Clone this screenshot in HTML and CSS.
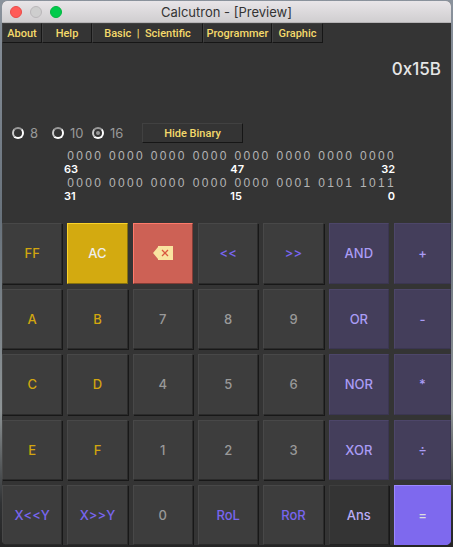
FILE: index.html
```html
<!DOCTYPE html>
<html lang="en">
<head>
<meta charset="utf-8">
<title>Calcutron</title>
<link rel="stylesheet" href="styles.css">
</head>
<body>
<main class="window">
  <header class="titlebar">
    <div class="lights">
      <span class="light close"></span>
      <span class="light minimize"></span>
      <span class="light zoom"></span>
    </div>
    <h1>Calcutron - [Preview]</h1>
  </header>
  <div class="panel">
    <nav class="menu">
      <button class="about">About</button>
      <button class="help">Help</button>
      <button class="modes">Basic &nbsp;|&nbsp; Scientific</button>
      <button class="programmer">Programmer</button>
      <button class="graphic">Graphic</button>
    </nav>
    <output class="display">0x15B</output>
    <div class="options">
      <label><input type="radio" name="base">8</label>
      <label><input type="radio" name="base">10</label>
      <label><input type="radio" name="base" checked>16</label>
      <button class="toggle">Hide Binary</button>
    </div>
    <section class="binary">
      <div class="bits">
        <div class="nibble"><i>0</i><i>0</i><i>0</i><i>0</i></div>
        <div class="nibble"><i>0</i><i>0</i><i>0</i><i>0</i></div>
        <div class="nibble"><i>0</i><i>0</i><i>0</i><i>0</i></div>
        <div class="nibble"><i>0</i><i>0</i><i>0</i><i>0</i></div>
        <div class="nibble"><i>0</i><i>0</i><i>0</i><i>0</i></div>
        <div class="nibble"><i>0</i><i>0</i><i>0</i><i>0</i></div>
        <div class="nibble"><i>0</i><i>0</i><i>0</i><i>0</i></div>
        <div class="nibble"><i>0</i><i>0</i><i>0</i><i>0</i></div>
      </div>
      <div class="marks"><b>63</b><b>47</b><b>32</b></div>
      <div class="bits">
        <div class="nibble"><i>0</i><i>0</i><i>0</i><i>0</i></div>
        <div class="nibble"><i>0</i><i>0</i><i>0</i><i>0</i></div>
        <div class="nibble"><i>0</i><i>0</i><i>0</i><i>0</i></div>
        <div class="nibble"><i>0</i><i>0</i><i>0</i><i>0</i></div>
        <div class="nibble"><i>0</i><i>0</i><i>0</i><i>0</i></div>
        <div class="nibble"><i>0</i><i>0</i><i>0</i><i>1</i></div>
        <div class="nibble"><i>0</i><i>1</i><i>0</i><i>1</i></div>
        <div class="nibble"><i>1</i><i>0</i><i>1</i><i>1</i></div>
      </div>
      <div class="marks"><b>31</b><b>15</b><b>0</b></div>
    </section>
    <section class="keys">
      <button class="hex">FF</button>
      <button class="clear">AC</button>
      <button class="delete" aria-label="Backspace">
        <svg width="20" height="14" viewBox="0 0 20 14"><path d="M0 7 5 1V0H20V14H5V13Z" fill="#f9e4a0"/><path d="M9 4l6 6M15 4l-6 6" stroke="#d9573f" stroke-width="1.3" fill="none"/></svg>
      </button>
      <button class="shift">&lt;&lt;</button>
      <button class="shift">&gt;&gt;</button>
      <button class="op">AND</button>
      <button class="op">+</button>

      <button class="hex">A</button>
      <button class="hex">B</button>
      <button>7</button>
      <button>8</button>
      <button>9</button>
      <button class="op">OR</button>
      <button class="op">-</button>

      <button class="hex">C</button>
      <button class="hex">D</button>
      <button>4</button>
      <button>5</button>
      <button>6</button>
      <button class="op">NOR</button>
      <button class="op">*</button>

      <button class="hex">E</button>
      <button class="hex">F</button>
      <button>1</button>
      <button>2</button>
      <button>3</button>
      <button class="op">XOR</button>
      <button class="op">÷</button>

      <button class="shift">X&lt;&lt;Y</button>
      <button class="shift">X&gt;&gt;Y</button>
      <button>0</button>
      <button class="shift">RoL</button>
      <button class="shift">RoR</button>
      <button class="answer">Ans</button>
      <button class="equals">=</button>
    </section>
  </div>
</main>
</body>
</html>
```
FILE: styles.css
```css
* {
  box-sizing: border-box;
}

body {
  margin: 0;
  padding: 1px 2px 2px;
  min-height: 100vh;
  display: flex;
  background: linear-gradient(#8a929c, #68727c 40%, #8e9496 75%, #303234 92%, #252525);
  font-family: Inter, "Liberation Sans", sans-serif;
}

button {
  margin: 0;
  padding: 0;
  font: inherit;
}

.window {
  flex: 1;
  display: flex;
  flex-direction: column;
  border-radius: 5px;
  overflow: hidden;
  background: #343434;
}

.titlebar {
  display: grid;
  grid-template-columns: 1fr auto 1fr;
  align-items: center;
  height: 22px;
  background: linear-gradient(#e8e5e8, #d0ced0);
  border-bottom: 1px solid #b5b3b5;
}

.titlebar h1 {
  margin: 0;
  font-size: 13px;
  font-weight: 400;
  color: #333;
}

.lights {
  display: flex;
  gap: 8px;
  padding-left: 8px;
}

.light {
  width: 12px;
  height: 12px;
  border-radius: 50%;
  border: 1px solid #b9b7b9;
  background: #cecece;
}

.close {
  background: #ff5b58;
  border-color: #e94a48;
}

.zoom {
  background: #00cb4c;
  border-color: #00b53f;
}

.panel {
  flex: 1;
  display: flex;
  flex-direction: column;
}

.menu {
  display: flex;
}

.menu button,
.toggle {
  height: 20px;
  background: #343434;
  border: 1px solid #414141;
  border-right-color: #161616;
  border-bottom-color: #161616;
  color: #f4da6b;
  font-family: Roboto, sans-serif;
  font-size: 11px;
  font-weight: 500;
}

.about { width: 40px; }
.help { width: 50px; }
.modes { width: 111px; }
.programmer { width: 69px; }
.graphic { width: 51px; }

.display {
  padding: 14px 10px 0;
  height: 80px;
  text-align: right;
  font-size: 17px;
  font-weight: 500;
  line-height: 24px;
  color: #e6e6e6;
}

.options {
  display: flex;
  align-items: center;
  height: 20px;
  padding-left: 10px;
  color: #999;
  font-size: 13px;
}

.options label {
  display: flex;
  align-items: center;
  gap: 6px;
  width: 40px;
}

.options input {
  appearance: none;
  display: grid;
  place-items: center;
  width: 12px;
  height: 12px;
  margin: 0;
  border: 2px solid #fff;
  border-top-color: #999;
  border-left-color: #ccc;
  border-radius: 50%;
}

.options input:checked::before {
  content: "";
  width: 4px;
  height: 4px;
  border-radius: 50%;
  background: #999;
}

.options .toggle {
  width: 101px;
  margin-left: 10px;
}

.binary {
  width: 331px;
  margin: 6px 0 0 62px;
  height: 74px;
}

.bits {
  display: flex;
  justify-content: space-between;
  padding-left: 2px;
  height: 14px;
  line-height: 14px;
  font-family: "Liberation Sans", sans-serif;
  font-size: 12px;
  color: #b4b4b4;
}

.nibble {
  display: grid;
  grid-template-columns: repeat(4, 9px);
  text-align: center;
}

.nibble i {
  font-style: normal;
}

.marks {
  display: grid;
  grid-template-columns: 1fr 1fr 1fr;
  height: 13px;
  line-height: 12px;
  font-size: 11px;
  color: #fff;
}

.marks b {
  font-weight: 600;
}

.marks b:nth-child(2) {
  margin-left: 56px;
}

.marks b:last-child {
  justify-self: end;
}

.keys {
  flex: 1;
  display: grid;
  grid-template-columns: repeat(6, 1fr) 57px;
  grid-template-rows: repeat(4, 1fr) 60px;
  gap: 5px;
}

.keys button {
  background: #3d3d3d;
  border: 1px solid #484848;
  border-right-color: #2b2b2b;
  border-bottom-color: #2b2b2b;
  box-shadow: 1px 1px 0 #181818;
  color: #999;
  font-size: 13px;
  font-weight: 500;
}

.keys .hex {
  color: #d2a60f;
}

.keys .shift {
  color: #7865ee;
}

.keys .clear {
  background: #d3aa10;
  border-color: #fbd32a #84700f #84700f #fbd32a;
  box-shadow: none;
  color: #eee;
}

.keys .delete {
  background: #cd6155;
  border-color: #ff7b6b #823c36 #823c36 #ff7b6b;
  box-shadow: none;
}

.delete svg {
  display: block;
  margin: auto;
}

.keys .op {
  background: #443e5b;
  border-color: #4d4669 #3b3651 #3b3651 #4d4669;
  box-shadow: none;
  color: #aa9cf5;
}

.keys .answer {
  background: #343434;
  border-color: #3e3e3e #222 #222 #3e3e3e;
  color: #b9acf5;
}

.keys .equals {
  background: #7e69ee;
  border: 1px solid #9c89ff;
  border-right-color: #7e69ee;
  border-bottom-color: #7e69ee;
  box-shadow: none;
  color: #ddd;
}
```
